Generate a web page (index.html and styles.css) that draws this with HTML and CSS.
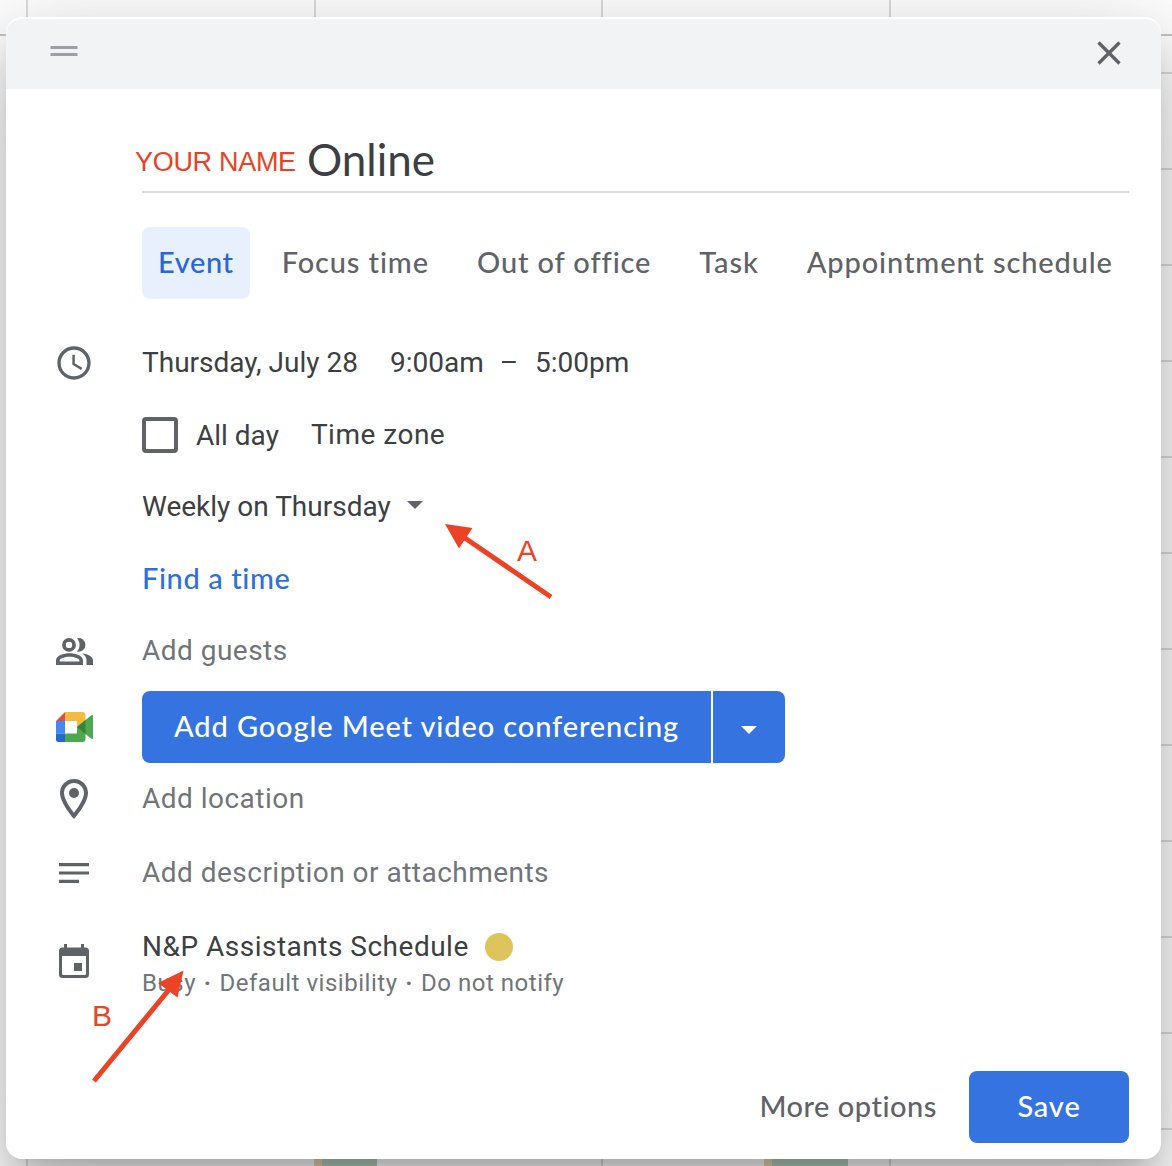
FILE: index.html
```html
<!DOCTYPE html>
<html lang="en">
<head>
<meta charset="utf-8">
<title>Calendar event</title>
<link rel="stylesheet" href="styles.css">
</head>
<body>
<div class="calendar">
  <div class="calendar-head"></div>
  <div class="calendar-hours"></div>
  <div class="booking booking-a"></div>
  <div class="booking booking-b"></div>
</div>
<main class="dialog">
  <header class="dialog-head">
    <svg class="grip" viewBox="0 0 28 10"><path d="M.5 0h27v3H.5zM.5 7h27v3H.5z"/></svg>
    <svg class="close" viewBox="0 0 24 24"><path d="M1.500 1.500l21 21M22.500 1.500l-21 21"/></svg>
  </header>
  <h1 class="title"><span class="title-name">YOUR NAME</span><span class="title-text">Online</span></h1>
  <nav class="tabs">
    <span class="tab tab-active">Event</span>
    <span class="tab">Focus time</span>
    <span class="tab">Out of office</span>
    <span class="tab">Task</span>
    <span class="tab">Appointment schedule</span>
  </nav>
  <section class="rows">
    <div class="row">
      <svg class="icon" viewBox="0 0 24 24"><path d="M11.99 2C6.47 2 2 6.48 2 12s4.47 10 9.99 10C17.52 22 22 17.52 22 12S17.52 2 11.99 2zM12 20c-4.420 0-8-3.580-8-8s3.580-8 8-8 8 3.580 8 8-3.580 8-8 8zm.5-13H11v6l5.250 3.150.75-1.230-4.500-2.670z"/></svg>
      <div class="when"><span class="date">Thursday, July 28</span><span class="start">9:00am</span><span class="dash">–</span><span class="end">5:00pm</span></div>
    </div>
    <div class="row">
      <div class="options"><span class="checkbox"></span><span class="all-day">All day</span><span class="zone">Time zone</span></div>
    </div>
    <div class="row">
      <div class="repeat"><span>Weekly on Thursday</span><svg class="caret" viewBox="0 0 16 8"><path d="M0 0h16L8 8z"/></svg></div>
    </div>
    <div class="row"><span class="find">Find a time</span></div>
    <div class="row">
      <svg class="icon icon-guests" viewBox="0 0 37 27"><path fill-rule="evenodd" d="M13 0a6.900 6.900 0 1 1 0 13.800A6.900 6.900 0 0 1 13 0zm0 3.700a3.200 3.200 0 1 0 0 6.400 3.200 3.200 0 0 0 0-6.400zM0 27v-4.500C0 17.500 7.500 15.200 13.500 15.200S27 17.500 27 22.500V27zm3.600-3.500h19.800v-1c0-2-5-3.800-9.900-3.800s-9.900 1.800-9.900 3.800z"/><path d="M21 .3a6.800 6.800 0 1 1 0 13.200c3.400-3.800 3.400-9.400 0-13.200zM26.500 15.400c5.500.8 10.500 3 10.500 7V27h-6.500v-4.500c0-3-1.500-5.300-4-7.100z"/></svg>
      <span class="hint">Add guests</span>
    </div>
    <div class="row row-meet">
      <svg class="meet-logo" viewBox="0 0 37 30">
        <path fill="#d95040" d="M0 9L9 0v9z"/>
        <path fill="#f5ba42" d="M9 0h17.500q3 0 3 3v6.500L21 15V9H9z"/>
        <path fill="#4587f4" d="M0 9h9v12.500H0z"/>
        <path fill="#2367d1" d="M0 21.500h9V30H2.500Q0 30 0 27.500z"/>
        <path fill="#4ea853" d="M9 21.500h12V15l8.500-7L35 3.500q2-1.400 2 .8v21.400q0 2.200-2 .8L29.500 22v5q0 3-3 3H9z"/>
        <path fill="#37833b" d="M21 15l8.500-7v14z"/>
      </svg>
      <div class="meet-button"><span class="meet-label">Add Google Meet video conferencing</span><span class="meet-more"><svg class="caret" viewBox="0 0 16 8"><path d="M0 0h16L8 8z"/></svg></span></div>
    </div>
    <div class="row">
      <svg class="icon icon-place" viewBox="0 0 24 24"><path d="M12 2C8.130 2 5 5.130 5 9c0 5.250 7 13 7 13s7-7.750 7-13c0-3.870-3.130-7-7-7zM7 9c0-2.760 2.240-5 5-5s5 2.240 5 5c0 2.880-2.880 7.190-5 9.880C9.920 16.210 7 11.850 7 9z"/><circle cx="12" cy="9" r="2.500"/></svg>
      <span class="hint">Add location</span>
    </div>
    <div class="row row-description">
      <svg class="icon-lines" viewBox="0 0 30 20"><path d="M0 0h30v3.200H0zM0 8.400h30v3.200H0zM0 16.800h20V20H0z"/></svg>
      <span class="hint">Add description or attachments</span>
    </div>
    <div class="row row-schedule">
      <svg class="icon-calendar" viewBox="0 0 30 34"><path fill-rule="evenodd" d="M5 0h3v3.500h14V0h3v3.500h1.500Q30 3.500 30 7v23.500q0 3.500-3.500 3.500h-23Q0 34 0 30.500V7q0-3.500 3.500-3.500H5zM3 12v17.500q0 1.500 1.500 1.500h21q1.500 0 1.500-1.500V12zM15 19h8v8h-8z"/></svg>
      <div class="schedule"><div class="schedule-name"><span>N&amp;P Assistants Schedule</span><i class="dot"></i></div><div class="schedule-meta">Busy <b>·</b> Default visibility <b>·</b> Do not notify</div></div>
    </div>
  </section>
  <footer class="actions"><span class="more">More options</span><span class="save">Save</span></footer>
</main>
<svg class="notes" viewBox="0 0 1172 1166">
  <path class="note-line" d="M551 597L462 536M94 1081L172 986"/>
  <path class="note-head" d="M445 524l27.500 4L459 548.500zM183.500 970.500L158 983l19.500 14.500z"/>
</svg>
<span class="note note-a">A</span>
<span class="note note-b">B</span>
</body>
</html>
```
FILE: styles.css
```css
* { box-sizing: border-box; }
body { margin: 0; width: 1172px; height: 1166px; overflow: hidden; position: relative; background: #fff; color: #3c4043; font: 400 28px/36px Roboto, sans-serif; }

/* Week grid behind the dialog */
.calendar { position: absolute; inset: 0; background: linear-gradient(#dadce0, #dadce0) 26px 0 / 2px 100% no-repeat, linear-gradient(#dadce0, #dadce0) 314px 0 / 2px 100% no-repeat, linear-gradient(#dadce0, #dadce0) 601px 0 / 2px 100% no-repeat, linear-gradient(#dadce0, #dadce0) 889px 0 / 2px 100% no-repeat; }
.calendar-head { height: 36px; border-bottom: 2px solid #c4c6c8; }
.calendar-hours { height: 1130px; margin-left: 26px; background: linear-gradient(transparent 94px, #dadce0 94px) 0 -58px / 100% 96px; }
.booking { position: absolute; bottom: 0; height: 20px; border-left: 8px solid #e4d7ad; background: #b2cdbe; }
.booking-a { left: 314px; width: 63px; }
.booking-b { left: 764px; width: 84px; }

/* Dialog */
.dialog { position: absolute; left: 6px; top: 17px; width: 1155px; height: 1142px; border-radius: 16px; overflow: hidden; background: #fff; border-top: 2px solid #fff; display: flex; flex-direction: column; box-shadow: 0 48px 76px 6px rgba(0,0,0,.14), 0 18px 92px 16px rgba(0,0,0,.12), 0 22px 30px -14px rgba(0,0,0,.2); }
.dialog-head { flex: none; height: 70px; padding: 0 40px 2px 44px; background: #f1f3f4; display: flex; align-items: center; justify-content: space-between; border-radius: 15px 15px 0 0; }
.grip { width: 28px; height: 10px; fill: #9aa0a6; margin-bottom: 4px; }
.close { width: 24px; height: 24px; fill: none; stroke: #5f6368; stroke-width: 3.4; }

.title { margin: 44px 32px 0 136px; height: 60px; border-bottom: 2px solid #dadce0; display: flex; align-items: center; font-weight: 400; }
.title-name { margin-left: -7px; width: 172px; color: #ea4226; font: 27px/36px "Liberation Sans", sans-serif; letter-spacing: -.3px; }
.title-text { font: 400 44px/56px Lato, sans-serif; padding-bottom: 6px; }

.tabs, .find, .meet-button, .actions { font-family: Lato, sans-serif; font-size: 29px; font-weight: 500; letter-spacing: .88px; font-variant-ligatures: none; }
.tabs { margin: 34px 0 0 136px; display: flex; gap: 16px; height: 72px; }
.tab { padding: 0 16px; line-height: 70px; color: #5f6368; border-radius: 8px; white-space: nowrap; }
.tab-active { background: #e8f0fe; color: #2a67d2; letter-spacing: .6px; }

/* Form rows */
.rows { margin-top: 28px; }
.row { height: 72px; display: flex; align-items: center; padding-left: 136px; }
.icon, .meet-logo, .icon-lines, .icon-calendar { flex: none; fill: #5f6368; }
.icon { width: 40px; height: 40px; margin: 0 48px 0 -88px; }
.icon-guests { width: 37px; height: 27px; margin: 0 49px 0 -86px; }
.icon-place { width: 48px; height: 48px; margin: 0 44px 0 -92px; }
.meet-logo { width: 37px; height: 30px; margin: 0 49px 0 -86px; }
.icon-lines { width: 30px; height: 20px; margin: 0 53px 0 -83px; }
.icon-calendar { width: 30px; height: 34px; margin: 0 53px 2px -83px; }
.when, .options, .repeat, .meet-button { display: flex; align-items: center; }
.start { margin-left: 32px; }
.dash { margin-left: 16px; }
.end { margin-left: 17px; }
.checkbox { width: 36px; height: 36px; border: 4px solid #5f6368; border-radius: 4px; }
.all-day { margin-left: 18px; padding-top: 2px; }
.zone { margin-left: 32px; letter-spacing: .5px; }
.caret { width: 16px; height: 8px; fill: #5f6368; }
.repeat .caret { margin: 0 0 4px 16px; }
.find { padding-bottom: 2px; color: #2f70e0; letter-spacing: .6px; }
.hint { color: #70757a; letter-spacing: .48px; }
.row-meet { margin-top: 4px; }
.meet-button { height: 72px; color: #fff; }
.meet-label, .meet-more { height: 72px; line-height: 70px; background: #3574e0; }
.meet-label { width: 569px; padding-left: 32px; border-radius: 8px 0 0 8px; white-space: nowrap; }
.meet-more { width: 72px; margin-left: 2px; border-radius: 0 8px 8px 0; display: flex; align-items: center; justify-content: center; }
.meet-more .caret { fill: #fff; margin-top: 5px; }
.row-description { margin-top: 2px; }
.row-schedule { height: 90px; margin-top: 8px; }
.schedule { padding-top: 6px; }
.schedule-name { display: flex; align-items: center; letter-spacing: .5px; }
.dot { width: 28px; height: 28px; border-radius: 50%; background: #dfc45b; margin-left: 16px; }
.schedule-meta { font-size: 24px; letter-spacing: .53px; color: #70757a; }
.schedule-meta b { margin: 0 1.3px; }

/* Footer */
.actions { margin: auto 32px 16px 0; display: flex; justify-content: flex-end; align-items: center; }
.more { margin-right: 32px; padding-bottom: 2px; color: #5f6368; letter-spacing: .52px; }
.save { width: 160px; height: 72px; line-height: 70px; border-radius: 8px; text-align: center; color: #fff; background: #3574e0; }

/* Red pointers over the dialog */
.notes { position: absolute; inset: 0; width: 1172px; height: 1166px; }
.note-line { stroke: #ec4226; stroke-width: 5; fill: none; }
.note-head { fill: #ec4226; }
.note { position: absolute; color: #ec4226; font: 30px/36px "Liberation Sans", sans-serif; }
.note-a { left: 517px; top: 533px; }
.note-b { left: 92px; top: 998px; }
```
